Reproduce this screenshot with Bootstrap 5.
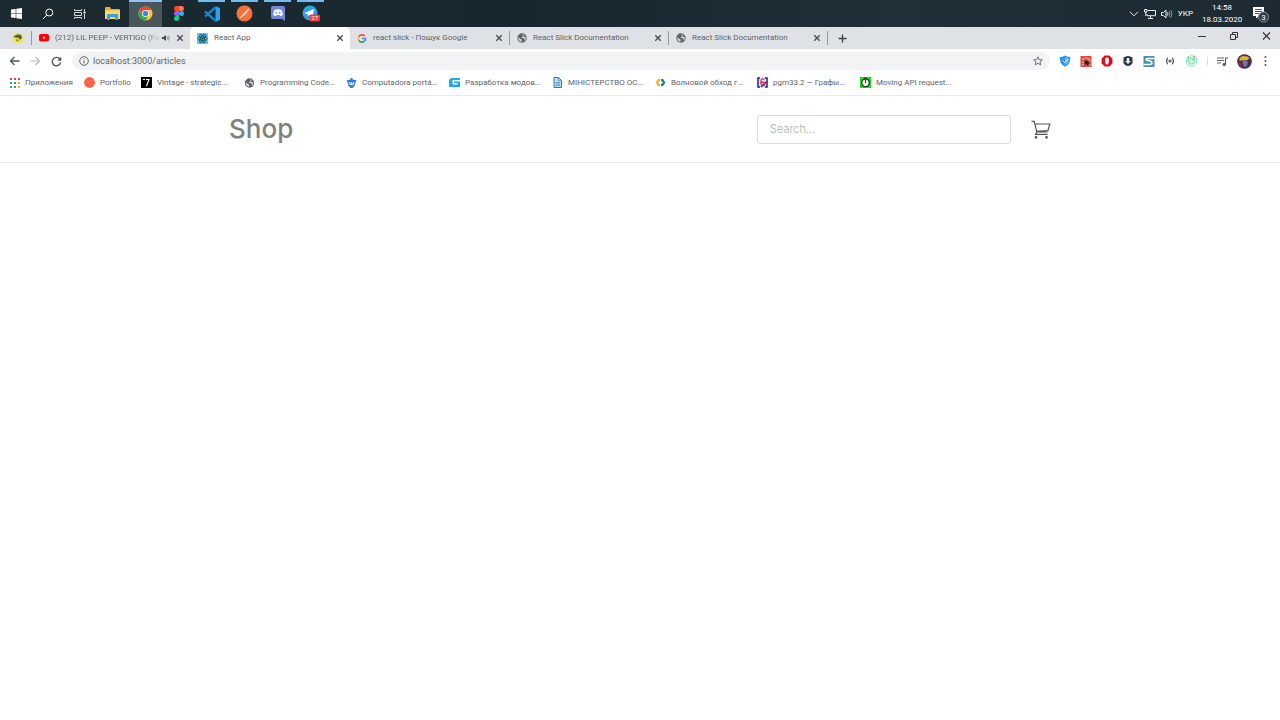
<!DOCTYPE html>
<html lang="uk">
<head>
<meta charset="utf-8">
<meta name="viewport" content="width=device-width, initial-scale=1">
<title>React App</title>
<link rel="stylesheet" href="https://cdn.jsdelivr.net/npm/bootstrap@5.3.0/dist/css/bootstrap.min.css">
<style>
body{font-family:Roboto,"Noto Sans",sans-serif;font-size:8px;line-height:12px;color:#5f6368;background:#fff}
svg{display:block;flex:none}
button{border:0;background:none;padding:0;color:inherit;display:flex;align-items:center;justify-content:center;flex:none}
a{color:inherit;text-decoration:none}
.taskbar{height:27px;background:linear-gradient(90deg,#1c2a32,#18262d 40%,#1f3038 70%,#1d2a32);color:#fff}
.task{width:32px;height:27px;border-top:2px solid transparent;border-bottom:2px solid transparent}
.app-task{width:33px}
.running{border-top-color:#76b9ed;background-clip:padding-box}
.focused{background:#4a565c;border-top-color:#8fc4ee}
.running:not(.focused){border-image:linear-gradient(90deg,transparent 10%,#76b9ed 10%,#76b9ed 90%,transparent 90%) 2 0 0 0}
.tray{padding-right:10px;gap:5px}
.clock{width:40px;margin:0 4px;line-height:12px}
.tabstrip{height:22px;background:#dee1e6}
.pinned{width:31px;padding-left:12px}
.chrome-tab{width:159px;padding:0 6px 0 7px;gap:6px}
.chrome-tab.current{width:160px;background:#fff;border-radius:5px 5px 0 0}
.divided{border-left:1px solid #a0a4a9;border-image:linear-gradient(transparent 20%,#96999e 20%,#96999e 80%,transparent 80%) 0 0 0 1}
.tab-title{white-space:nowrap;overflow:hidden;flex:1}
.fade-title{margin-right:-5px;-webkit-mask-image:linear-gradient(90deg,#000 86%,transparent)}
.toolbar{height:24px;padding:0 10px 0 8px}
.nav-btn{width:12px;margin-right:9px}
.address{height:18px;border-radius:9px;background:#f1f3f4;padding:0 7px;margin-left:1px}
.address input{border:0;background:none;outline:0;padding:0;font-size:9px;line-height:14px;color:#5f6368;min-width:0}
.extensions{gap:9px;padding-left:9px}
.bookmarks{height:23px;padding:0 10px 3px;border-bottom:1px solid #e8eaed;white-space:nowrap}
.bookmark{width:103px;gap:5px;flex:none}
.bookmark:nth-child(4n){width:102px}
.w-apps{width:74px}
.w-short{width:57px}
.shop-header{height:67px;border-bottom:1px solid #e5e5e5}
.shop-wrap{max-width:852px;padding:0 15px}
.brand{font:500 26px/32px Inter,sans-serif;color:#808080}
.search-box{width:254px;height:29px;border:1px solid #d9d9d9;border-radius:3px;padding:0 12px;font:300 11px/18px Inter,sans-serif;color:#666}
.search-box::placeholder{color:#b0b0b0;opacity:1}
</style>
</head>
<body>
<svg width="0" height="0" class="position-absolute" aria-hidden="true">
<symbol id="x" viewBox="0 0 8 8"><path d="M1.3 1.3l5.4 5.4M6.7 1.3L1.3 6.7" stroke="#45494d" stroke-width="1.3"/></symbol>
<symbol id="globe" viewBox="0 0 10 10"><circle cx="5" cy="5" r="4.7" fill="#5f6368"/><path d="M1.2 4.3l2 1.6 1.2.4.2 2.4C2.4 8.4 1.200 7 1.200 4.300zM5 1.300l2 .5-.4 1.400-1.500.6-.4 1.100 2 .1.900 1.200L7 8.100c1.400-1 2-2.400 1.700-3.900L7 4.100z" fill="#dee1e6"/></symbol>
</svg>

<header class="taskbar d-flex align-items-center">
<button class="task" aria-label="Start"><svg width="11" height="11" viewBox="0 0 11 11" fill="#fff"><path d="M0 1.600l4.700-.7v4.300H0zM5.300.8L11 0v5.200H5.300zM0 5.800h4.700v4.300L0 9.400zM5.300 5.800H11V11l-5.700-.8z"/></svg></button>
<button class="task" aria-label="Search"><svg width="12" height="12" viewBox="0 0 12 12" fill="none" stroke="#fff"><circle cx="7.300" cy="4.500" r="3.500"/><path d="M4.800 7L1 11"/></svg></button>
<button class="task" aria-label="Task view"><svg width="12" height="12" viewBox="0 0 12 12" fill="none" stroke="#cfd5d8"><path d="M.5 1v1.500h7V1M.5 11V9.500h7V11M.5 4.500h7v3h-7zM10.500 1v2M10.500 6v5"/><path d="M10.500 3.500v2" stroke="#fff" stroke-width="2"/></svg></button>
<button class="task app-task" aria-label="File Explorer"><svg width="15" height="13" viewBox="0 0 15 13"><path d="M0 1q0-1 1-1h4l1 2h8q1 0 1 1v9H0z" fill="#e7b13d"/><path d="M0 3.500h15V12H0z" fill="#ffd86b"/><path d="M2 13V8q0-1 1-1h9q1 0 1 1v5h-3v-3H5v3z" fill="#3f9bdc"/></svg></button>
<button class="task app-task running focused" aria-label="Google Chrome"><svg width="15" height="15" viewBox="0 0 16 16"><circle cx="8" cy="8" r="7.500" fill="#fcc934"/><path d="M1.500 4.250A7.500 7.500 0 0 1 14.500 4.250H8L4.750 9.800z" fill="#ea4335"/><path d="M1.500 4.250A7.500 7.500 0 0 0 8 15.500l3.250-5.700H4.750z" fill="#34a853"/><circle cx="8" cy="8" r="3.700" fill="#fff"/><circle cx="8" cy="8" r="2.900" fill="#4285f4"/></svg></button>
<button class="task app-task" aria-label="Figma"><svg width="10" height="15" viewBox="0 0 10 15"><path d="M5 0H2.500a2.500 2.500 0 0 0 0 5H5z" fill="#f24e1e"/><path d="M5 0h2.500a2.500 2.500 0 0 1 0 5H5z" fill="#ff7262"/><path d="M5 5H2.500a2.500 2.500 0 0 0 0 5H5z" fill="#a259ff"/><circle cx="7.500" cy="7.500" r="2.500" fill="#1abcfe"/><path d="M5 10H2.500A2.500 2.500 0 1 0 5 12.500z" fill="#0acf83"/></svg></button>
<button class="task app-task running" aria-label="Visual Studio Code"><svg width="16" height="16" viewBox="0 0 16 16"><path d="M11.500 0L16 2v12l-4.500 2z" fill="#2ba1f2"/><path d="M1 5.500l10.500 9.200M1 10.500L11.500 1.300" stroke="#1684cb" stroke-width="2.400"/></svg></button>
<button class="task app-task running" aria-label="Postman"><svg width="17" height="17" viewBox="0 0 17 17"><circle cx="8.500" cy="8.500" r="8" fill="#f8703c"/><path d="M4 13l5.500-6 3-2.500-2 3.500zM11 5l2-1" stroke="#fff" stroke-width=".7" fill="#f9b08c"/></svg></button>
<button class="task app-task running" aria-label="Discord"><svg width="14" height="15" viewBox="0 0 14 15"><path d="M2 0h10q2 0 2 2v13l-3-2H2q-2 0-2-2V2q0-2 2-2z" fill="#7289da"/><path d="M3.500 4Q7 2.500 10.500 4q1.300 2.500 1.200 5-1 1-2.500 1l-.7-1h-3l-.7 1q-1.500 0-2.500-1-.1-2.500 1.200-5z" fill="#fff"/><circle cx="5.300" cy="6.800" r=".9" fill="#7289da"/><circle cx="8.700" cy="6.800" r=".9" fill="#7289da"/></svg></button>
<button class="task app-task running" aria-label="Telegram"><svg width="18" height="17" viewBox="0 0 18 17"><circle cx="8" cy="8" r="7.500" fill="#2fa3dc"/><path d="M2.500 8L12 4l-1.500 8L7.500 9.800 6 11.200 5.500 9z" fill="#fff"/><rect x="7.500" y="9.500" width="10.500" height="7" rx="1.500" fill="#ed3a3f"/><text x="12.700" y="15.300" font-size="6" fill="#fff" text-anchor="middle">27</text></svg></button>
<div class="tray d-flex align-items-center ms-auto">
<button aria-label="Hidden icons"><svg width="10" height="6" viewBox="0 0 10 6" fill="none" stroke="#e8edef"><path d="M1 .8l4 4 4-4"/></svg></button>
<button aria-label="Network"><svg width="12" height="10" viewBox="0 0 12 10" fill="none" stroke="#e8edef"><path d="M4 1.500h7.500v5.200H3V5M6.500 7v2M4 9.500h5M.5.500H3V3H.5zM1.800 3v4"/></svg></button>
<button aria-label="Volume"><svg width="12" height="10" viewBox="0 0 12 10" fill="none" stroke="#e8edef"><path d="M.5 3.500h2l2.500-2.500v8L2.500 6.500h-2zM6.500 3.500q1 1.500 0 3"/><path d="M8 2q2 3 0 6M9.800 1q2.200 4 0 8" stroke="#7f8b90"/></svg></button>
<button>УКР</button>
<time class="clock text-center" datetime="2020-03-18T14:58">14:58<br>18.03.2020</time>
<button aria-label="Notifications"><svg width="19" height="18" viewBox="0 0 19 18"><path d="M2 2h11v9H8l-3 2.500V11H2z" fill="#fff"/><path d="M4 4.500h7M4 6.500h7M4 8.500h4" stroke="#26343b" stroke-width=".8"/><circle cx="12.500" cy="12" r="5" fill="#2f3c43" stroke="#8a9397"/><text x="12.500" y="15" font-size="8" fill="#fff" text-anchor="middle">3</text></svg></button>
</div>
</header>

<nav class="tabstrip d-flex" aria-label="Tabs">
<button class="pinned justify-content-start" aria-label="Pinned tab"><svg width="12" height="12" viewBox="0 0 12 12"><circle cx="6" cy="6" r="5.300" fill="#f3e63c"/><path d="M1 5l4-2.500 4 .3 1 3L8 8 6.500 6z" fill="#555b55"/><path d="M4 7l3 1-1 1.500-2-.5z" fill="#8a913c"/></svg></button>
<div class="chrome-tab divided d-flex align-items-center"><svg width="10" height="8" viewBox="0 0 10 8"><rect width="10" height="7.500" rx="1.800" fill="#f00"/><path d="M4 2.200v3.200l2.700-1.600z" fill="#fff"/></svg><a href="#" class="tab-title fade-title">(212) LiL PEEP - VERTIGO (Fu</a><svg width="8" height="8" viewBox="0 0 8 8"><path d="M0 3h1.500L4 1v6L1.500 5H0z" fill="#45494d"/><path d="M5 2.500q1.200 1.500 0 3M6.500 1.500q1.500 2.500 0 5" fill="none" stroke="#6b6f73" stroke-width=".7"/></svg><button aria-label="Close tab"><svg width="8" height="8"><use href="#x"/></svg></button></div>
<div class="chrome-tab current d-flex align-items-center"><svg width="11" height="11" viewBox="0 0 11 11"><rect width="11" height="11" rx="1" fill="#52c8e8"/><g fill="none" stroke="#20343c" stroke-width=".7"><ellipse cx="5.500" cy="5.500" rx="4.600" ry="1.900"/><ellipse cx="5.500" cy="5.500" rx="4.600" ry="1.900" transform="rotate(60 5.500 5.500)"/><ellipse cx="5.500" cy="5.500" rx="4.600" ry="1.900" transform="rotate(120 5.500 5.500)"/></g><circle cx="5.500" cy="5.500" r="1" fill="#20343c"/></svg><a href="#" class="tab-title">React App</a><button aria-label="Close tab"><svg width="8" height="8"><use href="#x"/></svg></button></div>
<div class="chrome-tab d-flex align-items-center"><svg width="10" height="9" viewBox="0 0 10 10" fill="none" stroke-width="1.800"><path d="M1.500 3A4 4 0 0 1 8 2.200" stroke="#ea4335"/><path d="M1.500 3a4 4 0 0 0 0 4" stroke="#fbbc05"/><path d="M1.500 7A4 4 0 0 0 7.700 8" stroke="#34a853"/><path d="M5 5h4q0 2-1.300 3" stroke="#4285f4"/></svg><a href="#" class="tab-title">react slick - Пошук Google</a><button aria-label="Close tab"><svg width="8" height="8"><use href="#x"/></svg></button></div>
<div class="chrome-tab divided d-flex align-items-center"><svg width="10" height="10"><use href="#globe"/></svg><a href="#" class="tab-title">React Slick Documentation</a><button aria-label="Close tab"><svg width="8" height="8"><use href="#x"/></svg></button></div>
<div class="chrome-tab divided d-flex align-items-center"><svg width="10" height="10"><use href="#globe"/></svg><a href="#" class="tab-title">React Slick Documentation</a><button aria-label="Close tab"><svg width="8" height="8"><use href="#x"/></svg></button></div>
<button class="divided px-2" aria-label="New tab"><svg width="13" height="9" viewBox="0 0 13 9"><path d="M6.500.5v8M2.500 4.500h8" stroke="#3c4043" stroke-width="1.300"/></svg></button>
<div class="d-flex ms-auto align-items-start pt-1 gap-4 pe-2">
<button aria-label="Minimize"><svg width="8" height="12" viewBox="0 0 8 12"><path d="M0 5.500h8" stroke="#333"/></svg></button>
<button aria-label="Restore"><svg width="8" height="10" viewBox="0 0 8 10" fill="none" stroke="#333"><path d="M.5 3.500h5v5h-5zM2.500 3V1.500h5v5H6"/></svg></button>
<button aria-label="Close window"><svg width="10" height="10" viewBox="0 0 10 10"><path d="M1 1.500l7 7M8 1.500l-7 7" stroke="#333" stroke-width="1.100"/></svg></button>
</div>
</nav>

<div class="toolbar d-flex align-items-center">
<button class="nav-btn" aria-label="Back"><svg width="11" height="10" viewBox="0 0 11 10" fill="none" stroke="#50555a" stroke-width="1.300"><path d="M10.500 5H1.500M5.500 1l-4 4 4 4"/></svg></button>
<button class="nav-btn" aria-label="Forward"><svg width="11" height="10" viewBox="0 0 11 10" fill="none" stroke="#babcbe" stroke-width="1.200"><path d="M.5 5h9M5.500 1l4 4-4 4"/></svg></button>
<button class="nav-btn" aria-label="Reload"><svg width="11" height="11" viewBox="0 0 11 11"><path d="M9 3.200A4.200 4.200 0 1 0 9.600 6.500" fill="none" stroke="#50555a" stroke-width="1.400"/><path d="M10.300.7v4H6.300z" fill="#50555a"/></svg></button>
<div class="address d-flex align-items-center flex-grow-1">
<svg width="10" height="10" viewBox="0 0 10 10"><circle cx="5" cy="5" r="4.300" fill="none" stroke="#5f6368"/><path d="M5 4.300v3.200M5 2.300v1" stroke="#5f6368"/></svg>
<input class="flex-grow-1 ms-1" type="text" aria-label="Address" value="localhost:3000/articles">
<button aria-label="Bookmark this page"><svg width="10" height="10" viewBox="0 0 10 10"><path d="M5 .8l1.200 2.800 3.100.3-2.300 2 .7 3L5 7.300 2.300 8.900l.7-3-2.300-2 3.100-.3z" fill="none" stroke="#5f6368" stroke-width=".9"/></svg></button>
</div>
<div class="extensions d-flex align-items-center">
<button aria-label="Shield"><svg width="12" height="12" viewBox="0 0 11 12"><path d="M5.500.5Q8 2 10.800 2q.4 7-5.300 9.700Q-.2 9 .2 2 3 2 5.500.5z" fill="#2196f3"/><path d="M5.500 2Q7.500 3 9.500 3.200 9.500 8 5.500 10.300" fill="#62c0ff"/><path d="M3 5.500l2 2 3.200-3" fill="none" stroke="#fff"/></svg></button>
<button aria-label="Pest control"><svg width="12" height="11" viewBox="0 0 12 11"><rect x=".5" width="11" height="11" fill="#e2493f"/><path d="M2 2.500l2 1 2-2 2 2 2-1M2 6h2M2 9l2-1M9 8l1.500 1M9 5l1.500-.5" stroke="#ffd0c8" fill="none"/><path d="M4.500 5l2-.5 2 1 1 2.500-2 1.500-1.500-1.500-1.500 1z" fill="#35201f"/></svg></button>
<button aria-label="Ad blocker"><svg width="12" height="12" viewBox="0 0 12 12"><path d="M3.700.6h4.600l3.100 3.100v4.600l-3.100 3.100H3.700L.6 8.300V3.700z" fill="#e00b18"/><path d="M4 3.500q.5-1 1-.5.500-1.300 1-.3.700-.8 1 .3.700 0 .8 1V7Q7.500 9.700 6 9.700T4 7z" fill="#fff"/></svg></button>
<button aria-label="Downloader"><svg width="12" height="12" viewBox="0 0 11 12"><path d="M1 2.500q4.500-3 9 0v6q-4.500 5-9 0z" fill="#2d384c"/><path d="M4.300 3h2.400v3h1.500L5.500 9 2.800 6h1.500z" fill="#fff"/></svg></button>
<button aria-label="Stylish"><svg width="12" height="11" viewBox="0 0 12 11"><rect x=".5" width="11" height="11" fill="#4e8db4"/><path d="M11.500 2.500H4.500q-2 0-1 1.500l5 1.600q1.500 2.700-1.500 2.900H.5" fill="none" stroke="#fff" stroke-width="1.500"/></svg></button>
<button aria-label="JSON viewer"><svg width="12" height="10" viewBox="0 0 12 10" fill="none" stroke="#3c4043" stroke-width="1.100"><path d="M4 2Q2.800 2 3 4q0 1-1 1 1 0 1 1-.2 2 1 2M8 2q1.200 0 1 2 0 1 1 1-1 0-1 1 .2 2-1 2M4.500 4.200h3M4.500 5.800h3"/></svg></button>
<button aria-label="Radar"><svg width="13" height="12" viewBox="0 0 13 12" fill="none"><circle cx="6.500" cy="6" r="5.300" fill="#dffbec" stroke="#8eebb9"/><circle cx="6.500" cy="6" r="3" stroke="#6ddda0"/><path d="M6.500 6l3.500-3" stroke="#4ccb85"/><path d="M2.500 2.500h1.500M8.500 1.500h1.500" stroke="#fb6b5f" stroke-width="1.500"/></svg></button>
<span class="vr my-1"></span>
<button aria-label="Media controls"><svg width="11" height="11" viewBox="0 0 11 11"><path d="M0 2h7M0 4.500h7M0 7h4" stroke="#5f6368" stroke-width="1.100"/><path d="M8.500 8.500V2H11" stroke="#5f6368" stroke-width="1.200" fill="none"/><circle cx="7.200" cy="8.500" r="1.700" fill="#5f6368"/></svg></button>
<button aria-label="Profile"><svg width="15" height="15" viewBox="0 0 15 15"><circle cx="7.500" cy="7.500" r="7.300" fill="#4c294f"/><path d="M2.500 4l3-2 5 .5 2 2-3 2-3-.5-4 1z" fill="#dfb52e"/><path d="M5 7l3-1 3 2-1 4-3 1z" fill="#756eb0"/><path d="M1 8l3 1 1 4-2-1z" fill="#a3283b"/></svg></button>
<button aria-label="Menu"><svg width="9" height="12" viewBox="0 0 9 12" fill="#50555a"><circle cx="4.500" cy="2" r="1"/><circle cx="4.500" cy="6" r="1"/><circle cx="4.500" cy="10" r="1"/></svg></button>
</div>
</div>

<nav class="bookmarks d-flex align-items-center" aria-label="Bookmarks">
<a href="#" class="bookmark w-apps d-flex align-items-center"><svg width="10" height="10" viewBox="0 0 10 10"><g fill="#ea4335"><path d="M0 0h2v2H0zM4 0h2v2H4zM8 0h2v2H8z"/></g><path d="M0 4h2v2H0zM0 8h2v2H0zM4 8h2v2H4z" fill="#34a853"/><path d="M4 4h2v2H4z" fill="#4285f4"/><path d="M8 4h2v2H8zM8 8h2v2H8z" fill="#f0b41c"/></svg>Приложения</a>
<a href="#" class="bookmark w-short d-flex align-items-center"><svg width="11" height="11" viewBox="0 0 11 11"><circle cx="5.500" cy="5.500" r="5.400" fill="#fb6547"/></svg>Portfolio</a>
<a href="#" class="bookmark d-flex align-items-center"><svg width="11" height="11" viewBox="0 0 11 11"><rect width="11" height="11" fill="#000"/><path d="M2 2.500h2M5 2.500h3L5.500 9" fill="none" stroke="#fff" stroke-width="1.100"/></svg>Vintage - strategic...</a>
<a href="#" class="bookmark d-flex align-items-center"><svg width="11" height="10"><use href="#globe"/></svg>Programming Code...</a>
<a href="#" class="bookmark d-flex align-items-center"><svg width="11" height="10" viewBox="0 0 10 10"><path d="M4 0h2v1.500l4 .7-1 2.300-.8 3L6 10H4L1.800 7.500 1 4.500 0 2.500l4-1z" fill="#3478e5"/><path d="M2.300 4h5.400v2.200l-2.700 1-2.700-1z" fill="#fff"/><circle cx="3.700" cy="5" r=".8" fill="#235bb8"/><circle cx="6.300" cy="5" r=".8" fill="#235bb8"/></svg>Computadora portá...</a>
<a href="#" class="bookmark d-flex align-items-center"><svg width="11" height="9" viewBox="0 0 11 9"><path d="M2 0h9v2H3.500v4.500h5V5H5V3.500h6V9H0V2z" fill="#29a8df"/></svg>Разработка модов...</a>
<a href="#" class="bookmark d-flex align-items-center"><svg width="11" height="11" viewBox="0 0 11 11"><path d="M2 .5h4.500L9.500 3.500v7H2z" fill="#b9e3fb" stroke="#38729e"/><path d="M6.300.5v3.200h3.200M3.500 5.500H8M3.500 7H8M3.500 8.500H8" fill="none" stroke="#4a8dbd" stroke-width=".8"/></svg>МІНІСТЕРСТВО ОС...</a>
<a href="#" class="bookmark d-flex align-items-center"><svg width="11" height="9" viewBox="0 0 10 9" fill="none" stroke-width="2.200"><path d="M4.500 2.200H3L1.500 4.500 3 6.800h1.500" stroke="#f6ad2b"/><path d="M5.500 2.200H7l1.500 2.300L7 6.800H5.500" stroke="#16848d"/></svg>Волновой обход г...</a>
<a href="#" class="bookmark d-flex align-items-center"><svg width="11" height="11" viewBox="0 0 11 11" fill="none"><rect width="11" height="11" fill="#e6e6fa"/><path d="M3 1H1v9h2M8 1h2v9H8M4 10L9 5" stroke="#2020c0" stroke-width="1.500"/><path d="M7.500 2.500Q4 .5 4 4.500v2.200q.2 2 2 2t1.700-2-1.700-1.500H4" stroke="#e42b3d" stroke-width="1.400"/></svg>pgm33.2 — Графы...</a>
<a href="#" class="bookmark d-flex align-items-center"><svg width="11" height="11" viewBox="0 0 11 11"><rect width="11" height="11" fill="#14dc26"/><circle cx="5.500" cy="5.800" r="3.800" fill="#fff" stroke="#263c2a" stroke-width="1.400"/><path d="M5.500 3v3M4 1h3" stroke="#263c2a"/></svg>Moving API request...</a>
</nav>

<main>
<div class="shop-header d-flex align-items-center">
<div class="shop-wrap container d-flex align-items-center">
<a class="brand" href="#">Shop</a>
<form class="ms-auto" role="search"><input class="search-box d-block" type="search" placeholder="Search..." aria-label="Search"></form>
<button class="ms-3 ps-1" aria-label="Cart"><svg width="20" height="20" viewBox="0 0 20 20" fill="none" stroke="#555" stroke-width="1.200"><path d="M.5 2.300h2.700l2.600 10.500h10.600M4 5h14.800l-1.900 6.600-11.400.7M5.800 12.800l-1.200 2.500h12"/><circle cx="5" cy="18.300" r=".8" fill="#555"/><circle cx="15.500" cy="18.300" r=".8" fill="#555"/></svg></button>
</div>
</div>
</main>
<script src="https://cdn.jsdelivr.net/npm/bootstrap@5.3.0/dist/js/bootstrap.bundle.min.js"></script>
</body>
</html>
